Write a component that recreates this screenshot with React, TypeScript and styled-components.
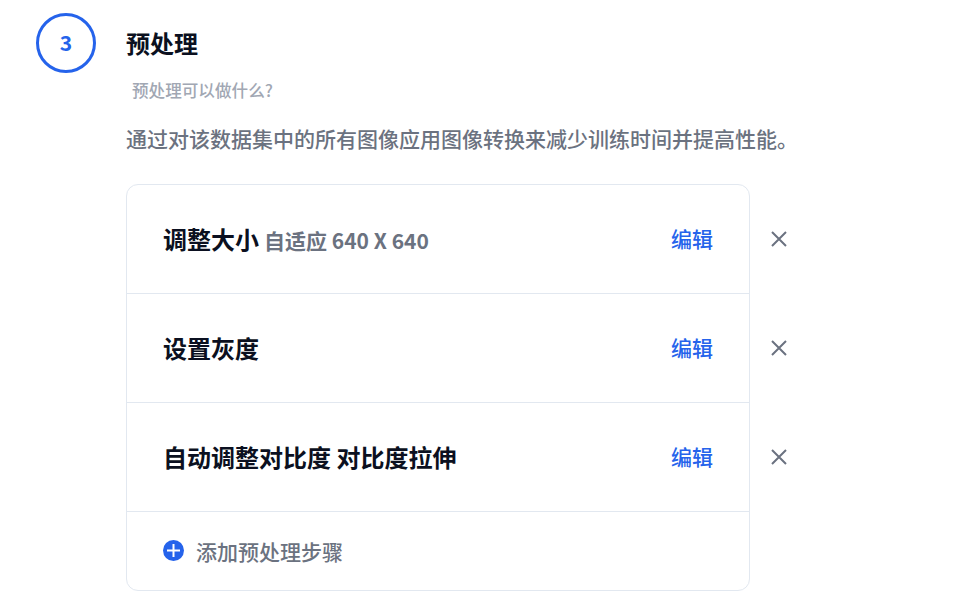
import React from "react";
import styled, { createGlobalStyle } from "styled-components";

const GlobalStyle = createGlobalStyle`
  html, body {
    margin: 0;
    padding: 0;
    background: #fff;
    font-family: "Noto Sans CJK SC", "Noto Sans", sans-serif;
  }
`;

const Page = styled.div`
  display: flex;
  align-items: flex-start;
  gap: 30px;
  width: 970px;
  height: 615px;
  padding: 13px 0 0 36px;
  box-sizing: border-box;
  overflow: hidden;
`;

const StepCircle = styled.div`
  display: flex;
  flex: none;
  align-items: center;
  justify-content: center;
  width: 60px;
  height: 60px;
  box-sizing: border-box;
  padding-bottom: 2px;
  border: 3px solid #2563eb;
  border-radius: 50%;
  color: #2563eb;
  font-size: 21px;
  font-weight: 700;
`;

const Content = styled.div`
  display: flex;
  flex-direction: column;
`;

const Title = styled.h2`
  margin: 13px 0 0;
  color: #0b1020;
  font-size: 24px;
  font-weight: 700;
  line-height: 34px;
`;

const Hint = styled.div`
  margin: 18px 0 0 6px;
  color: #a1a7b3;
  font-size: 16.6px;
  font-weight: 500;
  line-height: 24px;
`;

const Description = styled.p`
  margin: 20px 0 0;
  color: #6b7280;
  font-size: 21px;
  font-weight: 500;
  line-height: 32px;
  white-space: nowrap;
`;

const CardRow = styled.div`
  display: flex;
  margin-top: 30px;
`;

const Card = styled.div`
  width: 624px;
  box-sizing: border-box;
  border: 1px solid #e2e8f0;
  border-radius: 12px;
`;

const Step = styled.div`
  display: flex;
  align-items: center;
  justify-content: space-between;
  height: 109px;
  box-sizing: border-box;
  padding: 0 36px;
  border-bottom: 1px solid #e2e8f0;
`;

const StepName = styled.div`
  margin-top: -2px;
  color: #0b1020;
  font-size: 24px;
  font-weight: 700;
`;

const StepDetail = styled.span`
  margin-left: 5px;
  color: #6b7280;
  font-size: 21px;
  font-weight: 600;
`;

const EditLink = styled.a`
  margin-top: -3px;
  color: #2563eb;
  font-size: 21px;
  font-weight: 500;
`;

const AddRow = styled.div`
  display: flex;
  align-items: center;
  gap: 12px;
  height: 78px;
  padding: 0 36px;
  color: #6b7280;
  font-size: 21px;
  font-weight: 500;
`;

const Removes = styled.div`
  display: flex;
  flex-direction: column;
`;

const RemoveSlot = styled.div`
  display: flex;
  align-items: center;
  height: 109px;
  padding-left: 21px;
  box-sizing: border-box;
`;

const PlusSvg = styled.svg`
  flex: none;
  margin-bottom: 2px;
`;

const CloseIcon = () => (
  <svg width="16" height="16" viewBox="0 0 16 16" fill="none" stroke="#6b7280" strokeWidth="2">
    <path d="M1 1l14 14M15 1L1 15" />
  </svg>
);

const PlusIcon = () => (
  <PlusSvg width="21" height="21" viewBox="0 0 21 21">
    <circle cx="10.5" cy="10.5" r="10.5" fill="#2563eb" />
    <path d="M4 10.5h13M10.5 4v13" stroke="#fff" strokeWidth="2" />
  </PlusSvg>
);

const steps = [
  { name: "调整大小", detail: "自适应 640 X 640" },
  { name: "设置灰度" },
  { name: "自动调整对比度 对比度拉伸" }
];

export default function App() {
  return (
    <Page>
      <GlobalStyle />
      <StepCircle>3</StepCircle>
      <Content>
        <Title>预处理</Title>
        <Hint>预处理可以做什么?</Hint>
        <Description>通过对该数据集中的所有图像应用图像转换来减少训练时间并提高性能。</Description>
        <CardRow>
          <Card>
            {steps.map((step) => (
              <Step key={step.name}>
                <StepName>
                  {step.name}
                  {step.detail && <StepDetail>{step.detail}</StepDetail>}
                </StepName>
                <EditLink>编辑</EditLink>
              </Step>
            ))}
            <AddRow>
              <PlusIcon />
              添加预处理步骤
            </AddRow>
          </Card>
          <Removes>
            {steps.map((step) => (
              <RemoveSlot key={step.name}>
                <CloseIcon />
              </RemoveSlot>
            ))}
          </Removes>
        </CardRow>
      </Content>
    </Page>
  );
}
